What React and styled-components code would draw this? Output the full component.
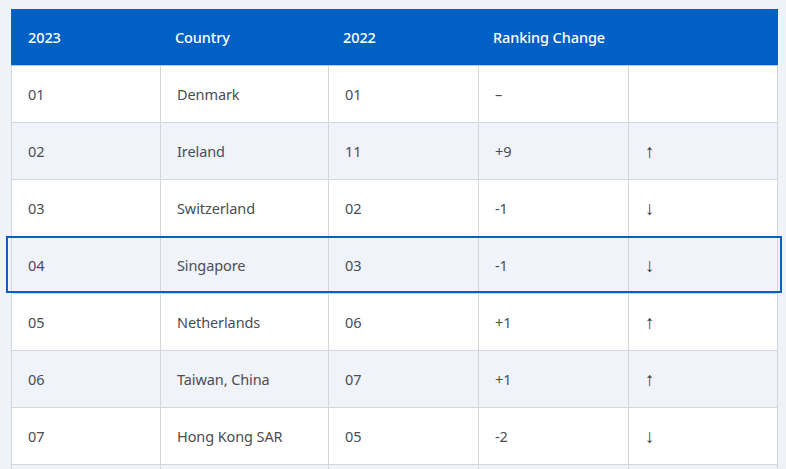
import React from 'react'
import styled, { createGlobalStyle } from 'styled-components'

const rows = [
  { y23: '01', country: 'Denmark', y22: '01', change: '–', dir: '' },
  { y23: '02', country: 'Ireland', y22: '11', change: '+9', dir: 'up' },
  { y23: '03', country: 'Switzerland', y22: '02', change: '-1', dir: 'down' },
  { y23: '04', country: 'Singapore', y22: '03', change: '-1', dir: 'down', active: true },
  { y23: '05', country: 'Netherlands', y22: '06', change: '+1', dir: 'up' },
  { y23: '06', country: 'Taiwan, China', y22: '07', change: '+1', dir: 'up' },
  { y23: '07', country: 'Hong Kong SAR', y22: '05', change: '-2', dir: 'down' },
  { y23: '08', country: 'Sweden', y22: '04', change: '-4', dir: 'down' }
]

const arrows = { up: '↑', down: '↓' }

const GlobalStyle = createGlobalStyle`
  body {
    margin: 0;
    background: #eff2f8;
    font-family: "Noto Sans", "Liberation Sans", sans-serif;
    overflow: hidden;
  }
`

const Page = styled.div`
  padding: 9px 8px 0 11px;
  height: 469px;
  box-sizing: border-box;
  overflow: hidden;
`

const Table = styled.div`
  width: 767px;
  border-right: 1px solid #d3d6dc;
  border-left: 1px solid #d3d6dc;
  box-sizing: border-box;
`

const cols = '148px 168px 150px 150px 1fr'

const Head = styled.div`
  display: grid;
  grid-template-columns: ${cols};
  height: 57px;
  background: #0060c6;
  border-bottom: 1px solid #a9cdf0;
  box-sizing: border-box;
  margin: 0 -1px;
`

const HeadCell = styled.div`
  display: flex;
  align-items: center;
  padding-left: ${(p) => (p.$first ? '17px' : '16px')};
  color: #ffffff;
  font-size: 14.5px;
  font-weight: 500;
  letter-spacing: -0.1px;
`

const Row = styled.div`
  position: relative;
  display: grid;
  grid-template-columns: ${cols};
  height: 57px;
  background: ${(p) => (p.$odd ? '#f0f3fa' : '#ffffff')};
  border-bottom: 1px solid #d3d6dc;
  box-sizing: border-box;

  ${(p) =>
    p.$active &&
    `
    &::after {
      content: '';
      position: absolute;
      top: -1px;
      bottom: 0;
      left: -6px;
      right: -5px;
      border: 2px solid #0a5fc6;
      pointer-events: none;
    }
  `}
`

const Cell = styled.div`
  display: flex;
  align-items: center;
  padding-left: 16px;
  color: #4a4d53;
  font-size: 14.5px;
  letter-spacing: -0.1px;
  & + & {
    border-left: 1px solid #d3d6dc;
  }
`

const Arrow = styled.span`
  font-family: "Liberation Sans", sans-serif;
  font-size: 19px;
  line-height: 1;
  color: #3f4247;
`

export default function App() {
  return (
    <Page>
      <GlobalStyle />
      <Table>
        <Head>
          <HeadCell $first>2023</HeadCell>
          <HeadCell>Country</HeadCell>
          <HeadCell>2022</HeadCell>
          <HeadCell>Ranking Change</HeadCell>
          <HeadCell />
        </Head>
        {rows.map((r, i) => (
          <Row key={r.y23} $odd={i % 2 === 1} $active={r.active}>
            <Cell>{r.y23}</Cell>
            <Cell>{r.country}</Cell>
            <Cell>{r.y22}</Cell>
            <Cell>{r.change}</Cell>
            <Cell>{r.dir && <Arrow>{arrows[r.dir]}</Arrow>}</Cell>
          </Row>
        ))}
      </Table>
    </Page>
  )
}
